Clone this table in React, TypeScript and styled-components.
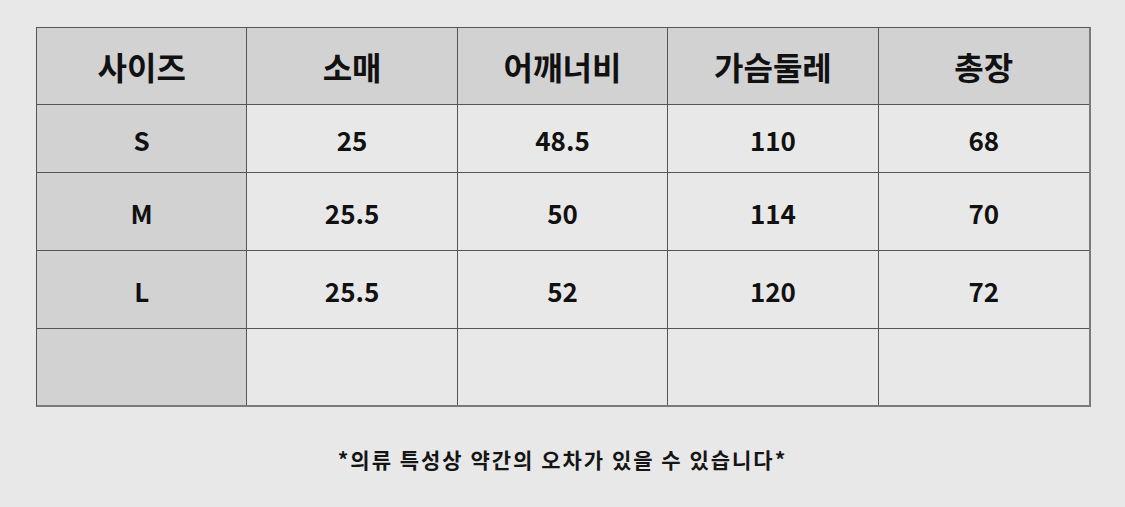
import React from 'react';
import styled, { createGlobalStyle } from 'styled-components';

const GlobalStyle = createGlobalStyle`
  html, body {
    margin: 0;
    padding: 0;
    background: #e8e8e8;
  }
  body {
    font-family: "Noto Sans CJK KR", "Noto Sans", sans-serif;
    color: #111;
  }
`;

const Page = styled.div`
  width: 1125px;
  height: 507px;
  padding: 27px 0 0 36px;
  box-sizing: border-box;
`;

const Grid = styled.div`
  display: grid;
  width: 1055px;
  grid-template-columns: repeat(5, 1fr);
  grid-template-rows: 77px 68px 78px 78px 76px;
  border-top: 1px solid #555;
  border-left: 1px solid #555;
  border-right: 2px solid #7a7a7a;
  border-bottom: 2px solid #7a7a7a;
  box-sizing: border-box;
`;

const Cell = styled.div<{ $shade?: boolean; $head?: boolean }>`
  display: flex;
  align-items: center;
  justify-content: center;
  background: ${(p) => (p.$shade ? '#d3d2d3' : '#e8e8e8')};
  border-right: 1px solid #555;
  border-bottom: 1px solid #555;
  font-weight: 700;
  font-size: ${(p) => (p.$head ? '32px' : '26px')};
  padding-top: ${(p) => (p.$head ? '0' : '1px')};
  &:nth-child(5n) {
    border-right: none;
  }
  &:nth-last-child(-n + 5) {
    border-bottom: none;
  }
`;

const Note = styled.p`
  margin: 37px 0 0 -36px;
  text-align: center;
  font-size: 21px;
  font-weight: 700;
  letter-spacing: 2px;
  color: #151515;
`;

const headers = ['사이즈', '소매', '어깨너비', '가슴둘레', '총장'];
const rows = [
  ['S', '25', '48.5', '110', '68'],
  ['M', '25.5', '50', '114', '70'],
  ['L', '25.5', '52', '120', '72'],
  ['', '', '', '', ''],
];

const App: React.FC = () => (
  <>
    <GlobalStyle />
    <Page>
      <Grid>
        {headers.map((h) => (
          <Cell key={h} $shade $head>
            {h}
          </Cell>
        ))}
        {rows.map((r, i) =>
          r.map((v, j) => (
            <Cell key={`${i}-${j}`} $shade={j === 0}>
              {v}
            </Cell>
          ))
        )}
      </Grid>
      <Note>*의류 특성상 약간의 오차가 있을 수 있습니다*</Note>
    </Page>
  </>
);

export default App;
